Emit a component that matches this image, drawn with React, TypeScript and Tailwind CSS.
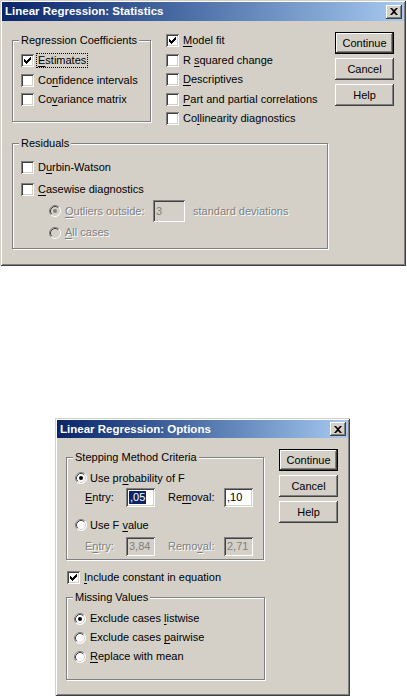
import React from "react";

const raised =
  "shadow-[inset_-1px_-1px_#404040,inset_1px_1px_#ffffff,inset_-2px_-2px_#808080,inset_2px_2px_#d4d0c8]";
const sunken =
  "shadow-[inset_1px_1px_#808080,inset_-1px_-1px_#ffffff,inset_2px_2px_#404040,inset_-2px_-2px_#d4d0c8]";
const frame =
  "shadow-[inset_1px_1px_#d4d0c8,inset_-1px_-1px_#404040,inset_2px_2px_#ffffff,inset_-2px_-2px_#808080]";
const dim = "text-[#808080] [text-shadow:1px_1px_0_#ffffff]";

function Acc({ text, u }: { text: string; u?: number }) {
  if (u === undefined || u < 0) return <>{text}</>;
  return (
    <>
      {text.slice(0, u)}
      <span className="underline decoration-1 underline-offset-[2px]">{text[u]}</span>
      {text.slice(u + 1)}
    </>
  );
}

function CheckMark() {
  return (
    <svg width="7" height="7" viewBox="0 0 7 7" className="block">
      <path d="M0 2h1v1h1v1h1v-1h1v-1h1v-1h1v-1h1v3h-1v1h-1v1h-1v1h-1v1h-1v-1h-1v-1h-1z" fill="#000" />
    </svg>
  );
}

function Check({
  label,
  u,
  checked,
  focus,
  className = "h-[20px]",
}: {
  label: string;
  u?: number;
  checked?: boolean;
  focus?: boolean;
  className?: string;
}) {
  return (
    <div className={`flex items-center ${className}`}>
      <div className={`w-[13px] h-[13px] bg-white flex items-center justify-center shrink-0 ${sunken}`}>
        {checked && <CheckMark />}
      </div>
      <span
        className={`ml-[2px] px-[1px] leading-[13px] border border-dotted whitespace-nowrap ${
          focus ? "border-black" : "border-transparent"
        }`}
      >
        <Acc text={label} u={u} />
      </span>
    </div>
  );
}

function RadioDot({ on, disabled }: { on?: boolean; disabled?: boolean }) {
  return (
    <svg width="12" height="12" viewBox="0 0 12 12" className="block shrink-0">
      <circle cx="6" cy="6" r="5.5" fill={disabled ? "#d4d0c8" : "#ffffff"} />
      <path d="M2.11 9.89 A5.5 5.5 0 0 1 9.89 2.11" stroke="#808080" fill="none" />
      <path d="M9.89 2.11 A5.5 5.5 0 0 1 2.11 9.89" stroke="#ffffff" fill="none" />
      <path d="M2.82 9.18 A4.5 4.5 0 0 1 9.18 2.82" stroke="#404040" fill="none" />
      <path d="M9.18 2.82 A4.5 4.5 0 0 1 2.82 9.18" stroke="#d4d0c8" fill="none" />
      {on && <circle cx="6" cy="6" r="2" fill={disabled ? "#808080" : "#000000"} />}
    </svg>
  );
}

function Radio({
  label,
  u,
  on,
  disabled,
  gap = "ml-[4px]",
  className = "h-[19px]",
}: {
  label: string;
  u?: number;
  on?: boolean;
  disabled?: boolean;
  gap?: string;
  className?: string;
}) {
  return (
    <div className={`flex items-center ${className}`}>
      <RadioDot on={on} disabled={disabled} />
      <span className={`${gap} whitespace-nowrap ${disabled ? dim : ""}`}>
        <Acc text={label} u={u} />
      </span>
    </div>
  );
}

function Group({
  legend,
  className,
  children,
}: {
  legend: string;
  className: string;
  children: React.ReactNode;
}) {
  return (
    <div
      className={`relative border border-[#808080] shadow-[inset_1px_1px_#ffffff,1px_1px_#ffffff] shrink-0 ${className}`}
    >
      <span className="absolute left-[6px] top-[-8px] px-[2px] bg-[#d4d0c8] leading-[14px] whitespace-nowrap">
        {legend}
      </span>
      {children}
    </div>
  );
}

function Btn({ label, def }: { label: string; def?: boolean }) {
  if (def) {
    return (
      <div className="w-[59px] h-[22px] border border-black flex">
        <div className={`flex-1 flex items-center justify-center ${raised}`}>{label}</div>
      </div>
    );
  }
  return <div className={`w-[59px] h-[22px] flex items-center justify-center ${raised}`}>{label}</div>;
}

function Field({
  value,
  disabled,
  selected,
  className,
}: {
  value: string;
  disabled?: boolean;
  selected?: boolean;
  className: string;
}) {
  return (
    <div
      className={`flex items-center pl-[3px] shrink-0 ${sunken} ${
        disabled ? "bg-[#d4d0c8] text-[#808080]" : "bg-white"
      } ${className}`}
    >
      {selected ? (
        <span className="bg-[#0a246a] text-white leading-[13px] px-[1px]">{value}</span>
      ) : (
        <span className="leading-[13px]">{value}</span>
      )}
    </div>
  );
}

function TitleBar({ title, className }: { title: string; className: string }) {
  return (
    <div
      className={`flex items-center bg-gradient-to-r from-[#0a246a] to-[#a6caf0] pl-[3px] pr-[2px] ${className}`}
    >
      <span className="flex-1 text-white font-bold text-[11.5px] whitespace-nowrap">{title}</span>
      <div className={`w-[16px] h-[14px] bg-[#d4d0c8] flex items-center justify-center ${raised}`}>
        <svg width="8" height="7" viewBox="0 0 8 7" className="block">
          <path d="M0 0h2l2 2 2-2h2l-3 3.5 3 3.5h-2l-2-2-2 2h-2l3-3.5z" fill="#000" />
        </svg>
      </div>
    </div>
  );
}

function StatisticsDialog() {
  return (
    <div className={`w-[406px] h-[266px] bg-[#d4d0c8] flex flex-col shrink-0 ${frame}`}>
      <TitleBar title="Linear Regression: Statistics" className="mx-[2px] mt-[2px] h-[19px]" />
      <div className="flex">
        <div className="ml-[12px] w-[316px] flex flex-col">
          <div className="flex items-start">
            <Group legend="Regression Coefficients" className="mt-[19px] w-[139px] h-[82px] pt-[10px] pl-[8px]">
              <Check label="Estimates" u={0} checked focus className="h-[19.5px]" />
              <Check label="Confidence intervals" u={2} className="h-[19.5px]" />
              <Check label="Covariance matrix" u={2} className="h-[19.5px]" />
            </Group>
            <div className="ml-[15px] mt-[10px] flex flex-col">
              <Check label="Model fit" u={0} checked className="h-[19.5px]" />
              <Check label="R squared change" u={2} className="h-[19.5px]" />
              <Check label="Descriptives" u={0} className="h-[19.5px]" />
              <Check label="Part and partial correlations" u={0} className="h-[19.5px]" />
              <Check label="Collinearity diagnostics" u={2} className="h-[19.5px]" />
            </div>
          </div>
          <Group legend="Residuals" className="mt-[14.5px] w-[316px] h-[106px] pt-[12px] pl-[8px]">
            <Check label="Durbin-Watson" u={1} className="h-[22px]" />
            <Check label="Casewise diagnostics" u={0} className="h-[22px]" />
            <div className="flex items-center h-[22px] pl-[28px]">
              <RadioDot on disabled />
              <span className={`ml-[4px] w-[88px] whitespace-nowrap ${dim}`}>
                <Acc text="Outliers outside:" u={0} />
              </span>
              <Field value="3" disabled className="w-[32px] h-[22px]" />
              <span className={`ml-[8px] whitespace-nowrap ${dim}`}>standard deviations</span>
            </div>
            <Radio label="All cases" u={0} disabled className="h-[21px] pl-[28px]" />
          </Group>
        </div>
        <div className="ml-[7px] mt-[11px] flex flex-col gap-[4px]">
          <Btn label="Continue" def />
          <Btn label="Cancel" />
          <Btn label="Help" />
        </div>
      </div>
    </div>
  );
}

function OptionsDialog() {
  return (
    <div className={`ml-[55px] mt-[152px] w-[295px] h-[278px] bg-[#d4d0c8] flex flex-col shrink-0 ${frame}`}>
      <TitleBar title="Linear Regression: Options" className="mx-[2px] mt-[2px] h-[18px]" />
      <div className="flex">
        <div className="ml-[11px] w-[199px] flex flex-col">
          <Group legend="Stepping Method Criteria" className="mt-[19px] w-[198px] h-[103px] pt-[10px] pl-[8px]">
            <Radio label="Use probability of F" u={6} on gap="ml-[3px]" className="h-[20px]" />
            <div className="flex items-center h-[19px] pl-[10px]">
              <span className="w-[41px]">
                <Acc text="Entry:" u={0} />
              </span>
              <Field value=",05" selected className="w-[29px] h-[19px]" />
              <span className="ml-[13px] w-[56px]">
                <Acc text="Removal:" u={2} />
              </span>
              <Field value=",10" className="w-[29px] h-[19px]" />
            </div>
            <Radio label="Use F value" u={6} gap="ml-[3px]" className="h-[20px] mt-[8px]" />
            <div className="flex items-center h-[19px] mt-[2px] pl-[10px]">
              <span className={`w-[41px] ${dim}`}>
                <Acc text="Entry:" u={1} />
              </span>
              <Field value="3,84" disabled className="w-[29px] h-[19px]" />
              <span className={`ml-[13px] w-[56px] ${dim}`}>
                <Acc text="Removal:" u={4} />
              </span>
              <Field value="2,71" disabled className="w-[29px] h-[19px]" />
            </div>
          </Group>
          <div className="mt-[7px] pl-[1px]">
            <Check label="Include constant in equation" u={0} checked className="h-[20px]" />
          </div>
          <Group legend="Missing Values" className="mt-[10px] w-[199px] h-[83px] pt-[11px] pl-[7px]">
            <Radio label="Exclude cases listwise" u={14} on />
            <Radio label="Exclude cases pairwise" u={14} />
            <Radio label="Replace with mean" u={0} />
          </Group>
        </div>
        <div className="ml-[14px] mt-[11px] flex flex-col gap-[4px]">
          <Btn label="Continue" def />
          <Btn label="Cancel" />
          <Btn label="Help" />
        </div>
      </div>
    </div>
  );
}

export default function App() {
  return (
    <div className="w-[407px] h-[696px] bg-white overflow-hidden flex flex-col font-['Liberation_Sans',Arial,sans-serif] text-[11px] text-black leading-[13px]">
      <StatisticsDialog />
      <OptionsDialog />
    </div>
  );
}
